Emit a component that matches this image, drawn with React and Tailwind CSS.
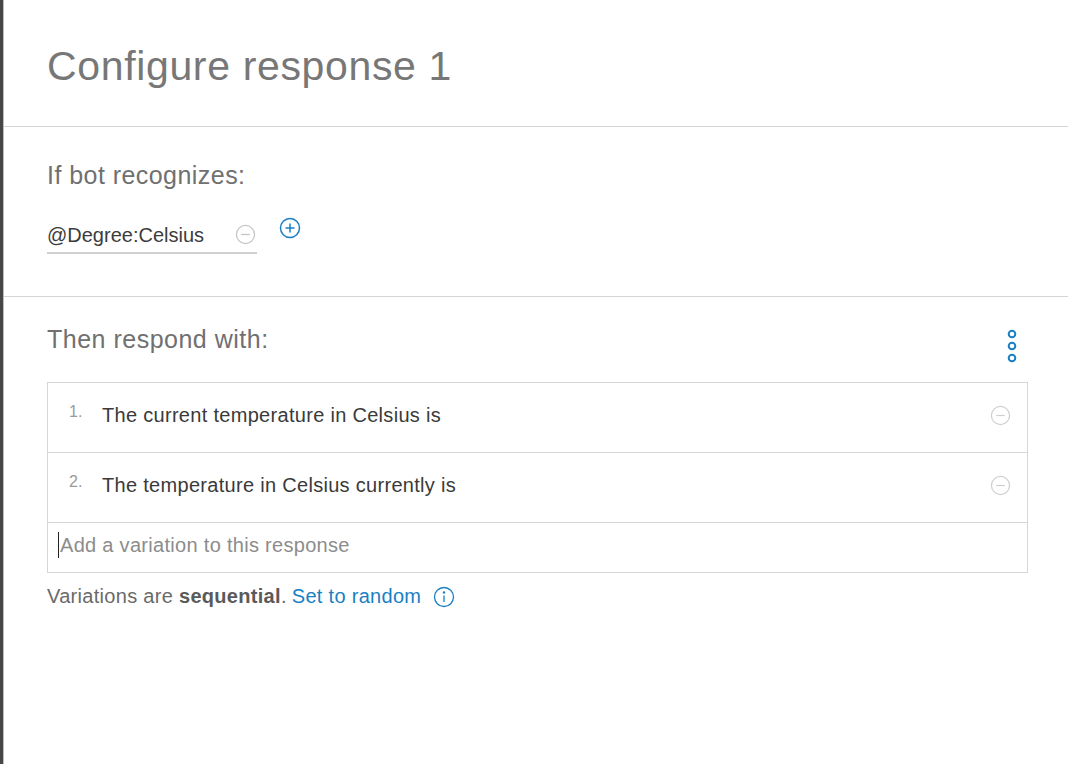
import { useState } from 'react';

const VARIACOES = [
  'The current temperature in Celsius is',
  'The temperature in Celsius currently is',
];

function MinusCircle({ className }) {
  return (
    <svg viewBox="0 0 22 22" className={className} fill="none" stroke="currentColor" strokeWidth="1.3">
      <circle cx="11" cy="11" r="9.5" />
      <line x1="6.5" y1="11" x2="15.5" y2="11" />
    </svg>
  );
}

function PlusCircle({ className }) {
  return (
    <svg viewBox="0 0 22 22" className={className} fill="none" stroke="currentColor" strokeWidth="1.5">
      <circle cx="11" cy="11" r="9.5" />
      <line x1="6.5" y1="11" x2="15.5" y2="11" />
      <line x1="11" y1="6.5" x2="11" y2="15.5" />
    </svg>
  );
}

function InfoCircle({ className }) {
  return (
    <svg viewBox="0 0 22 22" className={className} fill="none" stroke="currentColor" strokeWidth="1.3">
      <circle cx="11" cy="11" r="9.5" />
      <line x1="11" y1="9.5" x2="11" y2="16" />
      <circle cx="11" cy="6.5" r="0.6" fill="currentColor" />
    </svg>
  );
}

function Kebab() {
  return (
    <svg viewBox="0 0 12 34" className="w-[12px] h-[34px] text-[#1a7fc3]" fill="none" stroke="currentColor" strokeWidth="2">
      <circle cx="6" cy="5" r="3.3" />
      <circle cx="6" cy="17" r="3.3" />
      <circle cx="6" cy="29" r="3.3" />
    </svg>
  );
}

export default function App() {
  const [nova, setNova] = useState('');

  return (
    <div className="flex w-[1068px] h-[764px] bg-white overflow-hidden" style={{ fontFamily: '"Liberation Sans", Arial, sans-serif' }}>
      {/* barra lateral escura */}
      <div className="w-[3px] bg-[#474747] shrink-0" />
      <div className="w-[1px] bg-[#bdbdbd] shrink-0" />

      <div className="flex-1 flex flex-col">
        {/* Cabeçalho */}
        <div className="h-[127px] shrink-0 pl-[43px] pt-[40px] border-b border-[#d4d4d4]">
          <h1 className="text-[41px] leading-[52px] text-[#777777] tracking-[0.65px]">Configure response 1</h1>
        </div>

        {/* Condição */}
        <div className="h-[170px] shrink-0 pl-[43px] pt-[32px] border-b border-[#d4d4d4]">
          <p className="text-[25px] leading-[32px] text-[#707070] tracking-[0.45px]">If bot recognizes:</p>
          <div className="flex items-start mt-[22px]">
            <div className="w-[210px] h-[41px] flex items-end justify-between border-b-2 border-[#d0d0d0] pb-[4px]">
              <span className="text-[20px] leading-[26px] text-[#3c3c3c]">@Degree:Celsius</span>
              <MinusCircle className="w-[21px] h-[21px] text-[#c4c4c4] mr-[1px] mb-[3px]" />
            </div>
            <button className="ml-[22px] mt-[4px]">
              <PlusCircle className="w-[22px] h-[22px] text-[#1a7fc3]" />
            </button>
          </div>
        </div>

        {/* Resposta */}
        <div className="pl-[43px] pr-[40px] pt-[26px]">
          <div className="flex items-start justify-between">
            <p className="text-[25px] leading-[32px] text-[#707070] tracking-[0.5px]">Then respond with:</p>
            <div className="mt-[6px] mr-[10px]"><Kebab /></div>
          </div>

          <div className="mt-[19px] border border-[#d6d6d6]">
            {VARIACOES.map((v, i) => (
              <div key={i} className="h-[70px] flex items-start border-b border-[#d6d6d6] pl-[21px] pr-[16px] pt-[17px]">
                <span className="w-[33px] text-[16px] leading-[24px] text-[#9a9a9a]">{i + 1}.</span>
                <span className="flex-1 text-[20px] leading-[30px] text-[#3a3a3a] tracking-[0.3px]">{v}</span>
                <MinusCircle className="w-[21px] h-[21px] text-[#cfcfcf] mt-[5px]" />
              </div>
            ))}
            <div className="h-[49px] flex items-start pt-[9px] pl-[10px]">
              <input
                value={nova}
                onChange={(e) => setNova(e.target.value)}
                placeholder="Add a variation to this response"
                className="w-full text-[20px] tracking-[0.3px] outline-none text-[#333] placeholder:text-[#8c8c8c] border-l border-[#222] pl-[1px] leading-[26px]"
              />
            </div>
          </div>

          <div className="flex items-center mt-[10px] text-[20px] leading-[26px] tracking-[0.3px] text-[#6a6a6a]">
            <span>Variations are <b className="text-[#5a5a5a]">sequential</b>.</span>
            <a className="ml-[5px] text-[#1a7fc3]">Set to random</a>
            <InfoCircle className="ml-[12px] w-[22px] h-[22px] text-[#1a7fc3] mt-[2px]" />
          </div>
        </div>
      </div>
    </div>
  );
}
